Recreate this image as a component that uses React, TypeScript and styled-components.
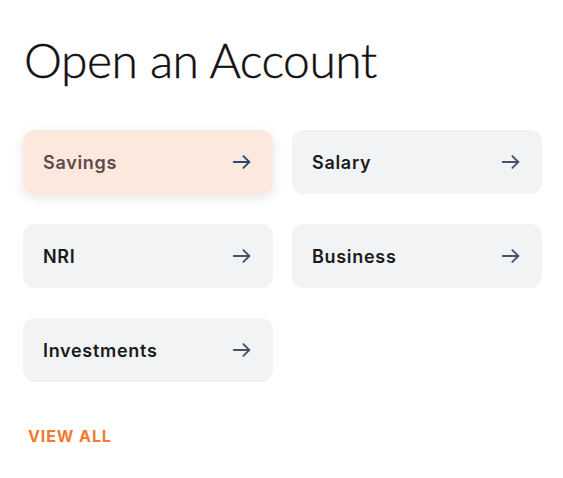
import React from 'react';
import styled, { createGlobalStyle } from 'styled-components';

const GlobalStyle = createGlobalStyle`
  body {
    margin: 0;
    background: #fff;
    font-family: Lato, "Noto Sans", sans-serif;
  }
`;

const Page = styled.section`
  padding: 30px 21px 0 23px;
  box-sizing: border-box;
  width: 563px;
`;

const Title = styled.h1`
  margin: 0 0 40px 1px;
  font-size: 48px;
  font-weight: 300;
  color: #111;
  letter-spacing: -0.5px;
  line-height: 60px;
  -webkit-text-stroke: 0.4px #111;
`;

const Grid = styled.div`
  display: grid;
  grid-template-columns: 250px 250px;
  column-gap: 19px;
  row-gap: 30px;
`;

const Card = styled.a<{ $active?: boolean }>`
  display: flex;
  align-items: center;
  justify-content: space-between;
  height: 64px;
  padding: 0 20px;
  box-sizing: border-box;
  border-radius: 12px;
  background: ${(p) => (p.$active ? '#fde8de' : '#f2f3f5')};
  box-shadow: ${(p) => (p.$active ? '0 4px 12px rgba(0, 0, 0, 0.1)' : 'none')};
  color: ${(p) => (p.$active ? '#5b4b4b' : '#1a1a1a')};
  font-family: Inter, "Noto Sans", sans-serif;
  font-size: 18px;
  font-weight: 600;
  letter-spacing: 0.7px;
  text-decoration: none;
  cursor: pointer;
`;

const Arrow = styled.svg<{ $active?: boolean }>`
  width: 22px;
  height: 22px;
  color: ${(p) => (p.$active ? '#2b4a78' : '#4a5068')};
`;

const ViewAll = styled.a`
  display: inline-block;
  margin: 44px 0 0 5px;
  color: #f47a30;
  font-family: Inter, "Noto Sans", sans-serif;
  font-size: 16px;
  font-weight: 700;
  letter-spacing: 0.9px;
  text-transform: uppercase;
  text-decoration: none;
`;

const items = ['Savings', 'Salary', 'NRI', 'Business', 'Investments'];

const ArrowIcon = ({ active }: { active?: boolean }) => (
  <Arrow $active={active} viewBox="0 0 24 24" fill="none" stroke="currentColor" strokeWidth="2" strokeLinecap="round" strokeLinejoin="round">
    <path d="M3 12h17" />
    <path d="M13.5 5.5 20 12l-6.5 6.5" />
  </Arrow>
);

export default function App() {
  return (
    <>
      <GlobalStyle />
      <Page>
        <Title>Open an Account</Title>
        <Grid>
          {items.map((name, i) => (
            <Card key={name} $active={i === 0}>
              {name}
              <ArrowIcon active={i === 0} />
            </Card>
          ))}
        </Grid>
        <ViewAll>View all</ViewAll>
      </Page>
    </>
  );
}
